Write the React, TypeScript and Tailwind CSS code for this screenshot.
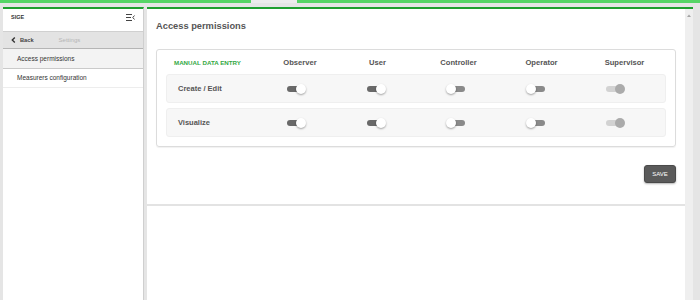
import React from "react";

type V = "on" | "off" | "dis";

function Toggle({ v }: { v: V }) {
  const track =
    v === "on" ? "bg-[#696969] left-0" : v === "off" ? "bg-[#8a8a8a] right-0" : "bg-[#d2d2d2] left-0";
  const knob =
    v === "on"
      ? "bg-white right-0 shadow-[0_1px_2px_rgba(0,0,0,0.35)]"
      : v === "off"
      ? "bg-white left-0 shadow-[0_1px_2px_rgba(0,0,0,0.35)]"
      : "bg-[#ababab] right-0";
  return (
    <div className="relative w-[19px] h-[10px]">
      <div className={`absolute top-[2px] w-[14px] h-[6px] rounded-full ${track}`} />
      <div className={`absolute top-0 w-[10px] h-[10px] rounded-full ${knob}`} />
    </div>
  );
}

const cols: V[] = ["on", "on", "off", "off", "dis"];

function Row({ label }: { label: string }) {
  return (
    <div className="grid grid-cols-[78px_80px_80px_79px_80px_80px] items-center h-[29px] pl-[11px] bg-[#f7f7f7] border border-[#efefef] rounded-[3px]">
      <div className="text-[7.5px] font-bold text-[#555] whitespace-nowrap">{label}</div>
      {cols.map((c, i) => (
        <div key={i} className="flex justify-center">
          <Toggle v={c} />
        </div>
      ))}
    </div>
  );
}

export default function App() {
  return (
    <div className="w-[700px] h-[300px] bg-[#e5e5e5] flex flex-col overflow-hidden font-['Liberation_Sans',Arial,sans-serif]">
      <div className="flex h-[3px] shrink-0">
        <div className="w-[251px] bg-[#55d566]" />
        <div className="w-[46px] bg-[#ececec]" />
        <div className="flex-1 bg-[#55d566]" />
      </div>
      <div className="flex-1 flex pt-[4px] pl-[3px] gap-[3px] min-h-0">
        {/* Sidebar */}
        <div className="w-[141px] shrink-0 bg-white border-t-2 border-t-[#1f9f30] border-r border-r-[#cfcfcf] flex flex-col">
          <div className="h-[22px] pb-[5px] px-[7px] flex items-center justify-between">
            <span className="text-[5.5px] font-bold text-[#333] pl-[1px]">SIGE</span>
            <svg width="9" height="7" viewBox="0 0 9 7" className="mr-[1px]">
              <path d="M0 0.5h6M0 3.5h5M0 6.5h6" stroke="#444" strokeWidth="1" />
              <path d="M8.5 1.5L6.8 3.5L8.5 5.5" stroke="#444" strokeWidth="1" fill="none" />
            </svg>
          </div>
          <div className="h-[18px] bg-[#e3e3e3] border-t border-t-[#d0d0d0] border-b border-b-[#b5b5b5] flex items-center px-[8px]">
            <svg width="5" height="6" viewBox="0 0 5 6" className="mr-[4px]">
              <path d="M3.8 0.6L1.3 3L3.8 5.4" stroke="#333" strokeWidth="1.4" fill="none" />
            </svg>
            <span className="text-[5.7px] text-[#444] font-bold">Back</span>
            <span className="text-[6px] text-[#b5b5b5] ml-[25px]">Settings</span>
          </div>
          <div className="h-[20px] bg-[#f3f3f3] border-b border-b-[#cacaca] flex items-center pl-[14px]">
            <span className="text-[6.5px] text-[#333]">Access permissions</span>
          </div>
          <div className="h-[19px] bg-white border-b border-b-[#ededed] flex items-center pl-[14px]">
            <span className="text-[6.5px] text-[#333]">Measurers configuration</span>
          </div>
        </div>

        {/* Main */}
        <div className="w-[546px] shrink-0 bg-white border-t-2 border-t-[#1f9f30] flex">
          <div className="flex-1 min-w-0 flex flex-col">
            <div className="px-[9px] pt-[10px] pb-[21px] border-b-2 border-b-[#e3e3e3] flex flex-col">
              <div className="h-[14px] leading-[14px] text-[9.3px] font-bold text-[#555]">Access permissions</div>
              <div className="mt-[16px] border border-[#dcdcdc] rounded-[3px] shadow-[0_1px_1px_rgba(0,0,0,0.06)] pt-[7px] pb-[9px] px-[9px]">
                <div className="h-[12px] grid grid-cols-[88px_76px_79px_83px_83px_83px] items-center pl-[8px]">
                  <div className="text-[6.2px] font-bold text-[#33a843] whitespace-nowrap">MANUAL DATA ENTRY</div>
                  {["Observer", "User", "Controller", "Operator", "Supervisor"].map((h) => (
                    <div key={h} className="text-center text-[7.6px] font-bold text-[#555]">
                      {h}
                    </div>
                  ))}
                </div>
                <div className="mt-[5px] flex flex-col gap-[5px]">
                  <Row label="Create / Edit" />
                  <Row label="Visualize" />
                </div>
              </div>
              <div className="mt-[18px] flex justify-end">
                <button className="w-[32px] h-[18px] bg-[#5a5a5a] border border-[#4a4a4a] rounded-[3px] text-white text-[6px] shadow-[0_1px_2px_rgba(0,0,0,0.3)]">
                  SAVE
                </button>
              </div>
            </div>
          </div>
          <div className="w-[8px] shrink-0 bg-[#efefef] flex justify-center pt-[5px]">
            <svg width="4" height="3" viewBox="0 0 4 3">
              <path d="M0 3L2 0.5L4 3Z" fill="#a3a3a3" />
            </svg>
          </div>
        </div>
      </div>
    </div>
  );
}
